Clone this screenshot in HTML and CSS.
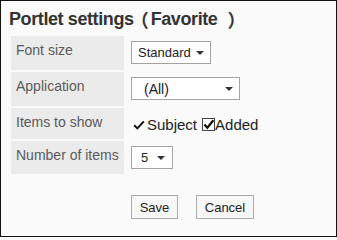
FILE: index.html
```html
<!DOCTYPE html>
<html lang="en">
<head>
<meta charset="utf-8">
<title>Portlet settings</title>
<link rel="stylesheet" href="styles.css">
</head>
<body>
<div class="panel">
  <h1 class="title">Portlet settings<span class="fw fw-open">（</span>Favorite<span class="fw fw-close">）</span></h1>
  <div class="form-grid">
    <div class="label r1">Font size</div>
    <div class="value r1">
      <div class="select select-std"><span>Standard</span><span class="caret"></span></div>
    </div>
    <div class="label r2">Application</div>
    <div class="value r2">
      <div class="select select-app"><span>(All)</span><span class="caret caret-wide"></span></div>
    </div>
    <div class="label r3">Items to show</div>
    <div class="value r3 checks">
      <svg class="tick" width="12" height="10" viewBox="0 0 12 10"><path d="M1.2 5.2 L4.4 8.4 L10.8 1.4" fill="none" stroke="#111" stroke-width="2"/></svg>
      <span class="check-label">Subject</span>
      <svg class="box" width="13" height="13" viewBox="0 0 13 13"><rect x="0.5" y="0.5" width="12" height="12" fill="#fff" stroke="#444"/><path d="M2.4 6.6 L5.3 9.8 L11.4 2.2" fill="none" stroke="#111" stroke-width="2.2"/></svg>
      <span>Added</span>
    </div>
    <div class="label r4">Number of items</div>
    <div class="value r4">
      <div class="select select-num"><span>5</span><span class="caret"></span></div>
    </div>
  </div>
  <div class="actions">
    <button class="btn btn-save" type="button">Save</button>
    <button class="btn btn-cancel" type="button">Cancel</button>
  </div>
</div>
</body>
</html>
```
FILE: styles.css
```css
html, body {
  margin: 0;
  padding: 0;
}
body {
  font-family: "Liberation Sans", Arial, "Noto Sans CJK JP", sans-serif;
  background: #fafafa;
}
.panel {
  width: 337px;
  height: 237px;
  box-sizing: border-box;
  border: 1px solid #111;
  background: #fafafa;
  padding: 8px 0 0 8px;
}
.title {
  margin: 0;
  font-size: 18px;
  line-height: 20px;
  font-weight: bold;
  letter-spacing: -0.4px;
  color: #333;
  white-space: nowrap;
}
.fw {
  display: inline-block;
  box-sizing: border-box;
  width: 17px;
  text-align: left;
  font-family: "Noto Sans CJK JP", sans-serif;
  font-feature-settings: "halt";
  font-weight: bold;
  letter-spacing: 0;
  line-height: 20px;
  vertical-align: top;
}
.fw-open {
  padding-left: 6px;
}
.fw-close {
  padding-left: 10px;
}
.form-grid {
  display: grid;
  grid-template-columns: 113px auto;
  grid-template-rows: 34px 34px 31px 33px;
  column-gap: 2px;
  row-gap: 2px;
  margin: 7px 0 0 2px;
}
.label {
  background: #ebebeb;
  color: #5a5a5a;
  font-size: 14px;
  line-height: 16px;
  padding: 6px 5px 0 5px;
  box-sizing: border-box;
  white-space: nowrap;
}
.value {
  padding: 5px 0 0 5px;
  box-sizing: border-box;
}
.select {
  display: inline-flex;
  align-items: center;
  height: 23px;
  box-sizing: border-box;
  border: 1px solid #a3a3a3;
  background: #fff;
  font-size: 13px;
  color: #222;
  white-space: nowrap;
}
.select-std {
  padding: 0 6px 0 6px;
}
.select-std .caret {
  margin-left: 5px;
}
.select-app {
  width: 109px;
  padding: 0 6px 0 12px;
  justify-content: space-between;
  font-size: 14px;
}
.select-num {
  width: 42px;
  padding: 0 7px 0 9px;
  justify-content: space-between;
}
.caret {
  width: 0;
  height: 0;
  border-left: 4px solid transparent;
  border-right: 4px solid transparent;
  border-top: 4px solid #333;
}
.caret-wide {
  border-left-width: 4.5px;
  border-right-width: 4.5px;
}
.checks {
  display: flex;
  align-items: center;
  padding: 8px 0 0 7px;
  height: 17px;
  box-sizing: content-box;
  font-size: 15px;
  line-height: 17px;
  color: #222;
}
.tick {
  display: block;
  margin-right: 2px;
}
.check-label {
  margin-right: 5px;
}
.box {
  display: block;
}
.actions {
  display: flex;
  gap: 18px;
  margin: 21px 0 0 122px;
}
.btn {
  height: 24px;
  box-sizing: border-box;
  border: 1px solid #ababab;
  background: #f7f7f7;
  color: #222;
  font-family: "Liberation Sans", Arial, sans-serif;
  font-size: 13px;
  padding: 0;
  text-align: center;
}
.btn-save {
  width: 47px;
}
.btn-cancel {
  width: 58px;
}
```
